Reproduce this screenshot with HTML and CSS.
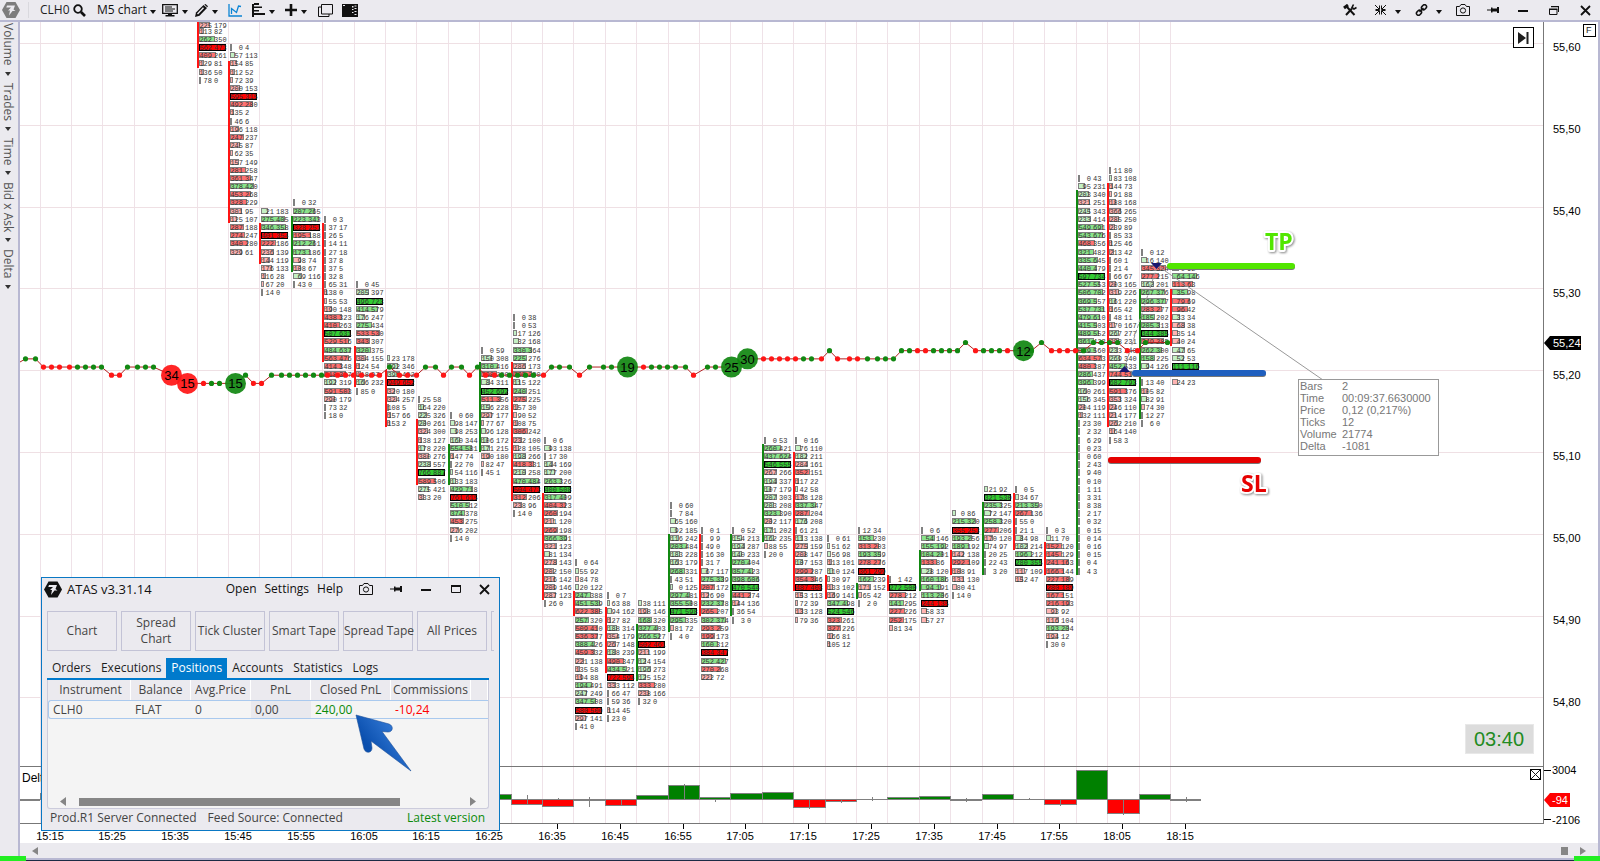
FILE: index.html
```html
<!DOCTYPE html>
<html lang="en">
<head>
<meta charset="utf-8">
<title>CLH0 M5 chart</title>
<link rel="stylesheet" href="styles.css">
</head>
<body>
<svg class="defs" width="0" height="0" aria-hidden="true">
  <symbol id="i-logo" viewBox="0 0 18 16"><path d="M4.500 0h9L18 8l-4.500 8h-9L0 8z"/><path class="cut" d="M5 3.500h8l-1.500 4 2 1.500h-3l-3.500 4.500 1-5H6l3-3H4.300z"/></symbol>
  <symbol id="i-camera" viewBox="0 0 14 13"><path fill="none" stroke="currentColor" d="M.500 2.500h3l1.500-2h4l1.500 2h3v9H.500z"/><circle cx="7" cy="6.500" r="2.600" fill="none" stroke="currentColor"/></symbol>
  <symbol id="i-pin" viewBox="0 0 12 8"><path d="M0 3.500h4V1.500h1.500V2.500H10V1h2v6h-2V5.500H5.500V6.500H4v-2H0z"/></symbol>
  <symbol id="i-close" viewBox="0 0 11 11"><path fill="none" stroke="currentColor" stroke-width="1.800" d="M1 1l9 9M10 1l-9 9"/></symbol>
  <symbol id="i-caret" viewBox="0 0 6 4"><path d="M0 0h6L3 4z"/></symbol>
</svg>

<header class="toolbar">
  <div class="tools">
    <svg class="app-logo" width="18" height="16"><use href="#i-logo"/></svg>
    <span class="rule"></span>
    <span class="symbol">CLH0</span>
    <button class="tool" aria-label="Find symbol"><svg class="stroked" width="13" height="13" viewBox="0 0 13 13"><circle cx="5" cy="5" r="3.800" stroke-width="1.800"/><path stroke-width="2.600" d="M8 8l4 4"/></svg></button>
    <button class="tool frame">M5 chart<svg width="6" height="4"><use href="#i-caret"/></svg></button>
    <button class="tool drop" aria-label="Template"><svg width="16" height="13" viewBox="0 0 16 13"><path fill="none" stroke="currentColor" stroke-width="1.300" d="M.700.700h14.600v8.600H.700z"/><path d="M3 2.500h7v1H3zM3 4.500h10v1H3zM3 6.500h8v1H3zM6 9h4v2h2.500v1.500h-9V11H6z"/></svg><svg width="6" height="4"><use href="#i-caret"/></svg></button>
    <button class="tool drop" aria-label="Draw"><svg width="13" height="13" viewBox="0 0 13 13"><path d="M0 13l1-4.500L8.500 1 12 4 4.500 11.800z"/><path fill="#ebeaef" d="M2 9.500l6-6.200 1 1L3 10.500z"/><path d="M9.300.500L10.500 0 13 2.300l-.800 1z"/></svg><svg width="6" height="4"><use href="#i-caret"/></svg></button>
    <button class="tool blue" aria-label="Indicators"><svg class="stroked" width="14" height="13" viewBox="0 0 14 13" stroke-width="1.300"><path d="M1 0v12h13M3.500 10V4.500l5 4L10.500 2 13 2.500"/></svg></button>
    <button class="tool drop" aria-label="Clusters"><svg width="13" height="14" viewBox="0 0 13 14"><path d="M0 1h2v13H0zM2 0h5v2H2zM2 3.500h8v1.500H2zM2 7h5v1.500H2zM2 10h11v2H2z"/></svg><svg width="6" height="4"><use href="#i-caret"/></svg></button>
    <button class="tool drop" aria-label="Crosshair"><svg width="12" height="12" viewBox="0 0 12 12"><path d="M4.700 0h2.600v4.700H12v2.600H7.300V12H4.700V7.300H0V4.700h4.700z"/></svg><svg width="6" height="4"><use href="#i-caret"/></svg></button>
    <button class="tool" aria-label="Windows"><svg width="15" height="13" viewBox="0 0 15 13"><path fill="none" stroke="currentColor" d="M3.500.500h11v9.500h-11zM3 3H.500v9.500H11V10"/></svg></button>
    <button class="tool" aria-label="Trading panel"><svg width="16" height="13" viewBox="0 0 16 13"><path d="M0 0h16v13H0z"/><path fill="#ebeaef" d="M10 2h1.500v1.500H10zM10 5h1.500v1H10zM10 8h1.500v1H10zM12.500 1.500h2v1h-2zM12.500 4h2v1h-2zM12.500 7h2v1h-2zM12.500 10h2v1h-2zM1 1h2v1H1z"/></svg></button>
  </div>
  <div class="tools">
    <button class="tool wide" aria-label="Settings"><svg class="stroked" width="14" height="12" viewBox="0 0 14 12"><path stroke-width="3" d="M1 4L5 1"/><path stroke-width="2" d="M4 3l7.500 8M3 11l6-6.500"/><path stroke-width="1.600" d="M10.500 0.500L9 3.500l2 1.500 2.500-1.500"/></svg></button>
    <button class="tool wider" aria-label="Collapse"><svg class="stroked" width="13" height="12" viewBox="0 0 13 12"><path d="M1 1l4 4M12 1L8 5M1 11l4-4M12 11L8 7M5.500 1.500v4h-4M7.500 1.500v4h4M5.500 10.500v-4h-4M7.500 10.500v-4h4"/></svg><svg width="6" height="4"><use href="#i-caret"/></svg></button>
    <button class="tool wider" aria-label="Link"><svg class="stroked" width="13" height="12" viewBox="0 0 13 12" stroke-width="1.500"><rect x="7" y="0.500" width="4" height="5.500" rx="2" transform="rotate(45 9 3.250)"/><rect x="2" y="6" width="4" height="5.500" rx="2" transform="rotate(45 4 8.750)"/><path d="M4.500 8L8.500 4"/></svg><svg width="6" height="4"><use href="#i-caret"/></svg></button>
    <button class="tool wide" aria-label="Screenshot"><svg width="14" height="13"><use href="#i-camera"/></svg></button>
    <button class="tool wide" aria-label="Pin"><svg width="12" height="8"><use href="#i-pin"/></svg></button>
    <button class="tool wide" aria-label="Minimize"><svg width="10" height="6"><path d="M0 3h10v2H0z"/></svg></button>
    <button class="tool wide" aria-label="Restore"><svg width="10" height="9" viewBox="0 0 10 9"><path fill="none" stroke="currentColor" d="M.500 3.500h7.500v5H.500zM2 .500h7.500V6"/><path d="M0 2.500h8.500v1.500H0zM2 0h8v1.300H2z"/></svg></button>
    <button class="tool last" aria-label="Close"><svg width="11" height="11"><use href="#i-close"/></svg></button>
  </div>
</header>

<main class="workspace">
  <nav class="rail">
    <button>Volume<svg width="6" height="4"><use href="#i-caret"/></svg></button>
    <button>Trades<svg width="6" height="4"><use href="#i-caret"/></svg></button>
    <button>Time<svg width="6" height="4"><use href="#i-caret"/></svg></button>
    <button>Bid x Ask<svg width="6" height="4"><use href="#i-caret"/></svg></button>
    <button>Delta<svg width="6" height="4"><use href="#i-caret"/></svg></button>
  </nav>

  <section class="chart">
    <div class="plot">
      <svg id="plot" class="fill"></svg>
      <dl class="ruler">
        <dt>Bars</dt><dd>2</dd>
        <dt>Time</dt><dd>00:09:37.6630000</dd>
        <dt>Price</dt><dd>0,12 (0,217%)</dd>
        <dt>Ticks</dt><dd>12</dd>
        <dt>Volume</dt><dd>21774</dd>
        <dt>Delta</dt><dd>-1081</dd>
      </dl>
      <button class="to-end" aria-label="Go to last bar"><svg width="11" height="12"><path d="M0 0l8 6-8 6zM8.500 0h2v12h-2z"/></svg></button>
      <div class="timer">03:40</div>
    </div>
    <div class="axis">
      <svg id="prices" class="fill"></svg>
      <button class="fix">F</button>
    </div>
    <div class="delta">
      <svg id="delta" class="fill"></svg>
      <span class="panel-name">Delta</span>
      <button class="panel-close" aria-label="Remove panel"><svg class="stroked" width="9" height="9"><path d="M0 0l9 9M9 0L0 9"/></svg></button>
    </div>
    <div class="axis">
      <svg id="delta-scale" class="fill"></svg>
    </div>
    <div class="times"><svg id="times" class="fill"></svg></div>
    <div class="scroller">
      <button aria-label="Scroll left"><svg width="6" height="8"><path d="M6 0v8L0 4z"/></svg></button>
      <span class="thumb"></span>
      <button aria-label="Scroll right"><svg width="6" height="8"><path d="M0 0v8l6-4z"/></svg></button>
    </div>
  </section>
</main>
<div class="corner corner-left"></div>
<div class="corner corner-right"></div>

<section class="window" aria-label="ATAS">
  <div class="titlebar">
    <svg width="18" height="17"><use href="#i-logo"/></svg>
    <h1>ATAS v3.31.14</h1>
    <button class="menu">Open</button>
    <button class="menu">Settings</button>
    <button class="menu">Help</button>
    <button class="ctl" aria-label="Screenshot"><svg width="14" height="13"><use href="#i-camera"/></svg></button>
    <button class="ctl" aria-label="Pin"><svg width="12" height="8"><use href="#i-pin"/></svg></button>
    <button class="ctl" aria-label="Minimize"><svg width="10" height="6"><path d="M0 3h10v2H0z"/></svg></button>
    <button class="ctl" aria-label="Maximize"><svg width="10" height="8"><path fill="none" stroke="currentColor" d="M.500.500h9v7h-9z"/><path d="M0 0h10v2H0z"/></svg></button>
    <button class="ctl" aria-label="Close"><svg width="11" height="11"><use href="#i-close"/></svg></button>
  </div>
  <div class="launch">
    <button>Chart</button>
    <button>Spread<br>Chart</button>
    <button>Tick Cluster</button>
    <button>Smart Tape</button>
    <button>Spread Tape</button>
    <button>All Prices</button>
    <button aria-label="More"></button>
  </div>
  <div class="tabs" role="tablist">
    <button role="tab">Orders</button>
    <button role="tab">Executions</button>
    <button role="tab" aria-selected="true">Positions</button>
    <button role="tab">Accounts</button>
    <button role="tab">Statistics</button>
    <button role="tab">Logs</button>
  </div>
  <div class="grid">
    <table>
      <colgroup><col class="c-first"><col class="c-mid"><col class="c-mid"><col class="c-mid"><col class="c-wide"><col class="c-wide"><col></colgroup>
      <thead><tr><th>Instrument</th><th>Balance</th><th>Avg.Price</th><th>PnL</th><th>Closed PnL</th><th>Commissions</th><th></th></tr></thead>
      <tbody><tr><td>CLH0</td><td>FLAT</td><td>0</td><td class="shade">0,00</td><td class="gain">240,00</td><td class="loss">-10,24</td><td></td></tr></tbody>
    </table>
    <div class="hscroll">
      <button aria-label="Scroll left"><svg width="6" height="9"><path d="M6 0v9L0 4.500z"/></svg></button>
      <span class="track"><span class="bar"></span></span>
      <button aria-label="Scroll right"><svg width="6" height="9"><path d="M0 0v9l6-4.500z"/></svg></button>
    </div>
  </div>
  <footer class="status"><span>Prod.R1 Server Connected</span><span>Feed Source: Connected</span><span class="gain">Latest version</span></footer>
  <svg class="pointer" width="58" height="60" viewBox="0 0 58 60"><defs><linearGradient id="pg" x1="0" y1="0.600" x2="0.800" y2="0"><stop offset="0.200" stop-color="#0a4fae"/><stop offset="1" stop-color="#3f85e0"/></linearGradient></defs><path fill="url(#pg)" stroke="#1b4f99" stroke-width=".6" stroke-linejoin="round" d="M1 1l33 9c5 2 4 8-1 8l-6-.5L56 57 16 27l1 7c0 5-6 6-8 1z"/></svg>
</section>
<script src="chart.js"></script>
</body>
</html>
```
FILE: styles.css
```css
* { box-sizing: border-box; }
body {
  margin: 0;
  height: 100vh;
  display: flex;
  flex-direction: column;
  overflow: hidden;
  background: #ebeaef;
  color: #1e1e1e;
  font: 12px/16px "Open Sans", "Noto Sans", sans-serif;
  border-bottom: 1px solid #1c2b45;
}
button {
  margin: 0;
  padding: 0;
  border: 0;
  background: none;
  font: inherit;
  color: inherit;
  cursor: pointer;
}
svg { fill: currentColor; flex: none; }
.stroked { fill: none; stroke: currentColor; }
.defs { position: absolute; }
.cut { fill: #ebeaef; }
.fill { display: block; width: 100%; height: 100%; }

/* Toolbar */
.toolbar {
  display: flex;
  justify-content: space-between;
  height: 22px;
  flex: none;
  border-bottom: 2px solid #b8b8d2;
}
.tools { display: flex; align-items: center; }
.app-logo { margin-left: 2px; color: #7d7d7d; }
.rule { width: 1px; height: 16px; margin: 0 11px 0 8px; background: #d9d9de; }
.symbol { width: 33px; }
.tool { width: 24px; height: 20px; display: flex; align-items: center; gap: 4px; color: #111; white-space: nowrap; }
.tool svg + svg, .frame svg { margin-top: 4px; }
.frame { width: 65px; gap: 3px; }
.drop { width: 33px; }
.wide { width: 31px; }
.wider { width: 41px; gap: 8px; }
.last { width: 20px; }
.blue { color: #0c84d4; }

/* Chart area */
.workspace { flex: 1; display: flex; min-height: 0; }
.rail {
  width: 20px;
  border-right: 2px solid #b8b8d2;
  display: flex;
  flex-direction: column;
  align-items: flex-start;
  padding-top: 1px;
  gap: 7px;
}
.rail button { writing-mode: vertical-rl; display: flex; align-items: center; gap: 6px; color: #555; line-height: 16px; }
.rail svg { color: #333; }
.chart {
  flex: 1;
  min-width: 0;
  display: grid;
  grid-template-columns: 1fr 55px;
  grid-template-rows: 1fr 58px 19px 17px;
  background: #fff;
  border-right: 2px solid #b8b8d2;
  font: 11px/12px "Liberation Sans", Arial, sans-serif;
}
.plot, .delta, .axis { position: relative; min-height: 0; min-width: 0; overflow: hidden; }
.axis { border-left: 1px solid #777; }
.delta { border-top: 1px solid #777; border-bottom: 1px solid #777; }
.times { grid-column: 1 / -1; }
.scroller {
  grid-column: 1 / -1;
  display: flex;
  align-items: center;
  gap: 12px;
  padding: 0 12px;
  background: #ebeaef;
  border-bottom: 2px solid #b8b8d2;
  color: #868686;
}
.scroller button, .hscroll button { display: flex; }
.thumb { width: 7px; height: 8px; margin-left: auto; background: #868686; }

.cell { font: 7px "Liberation Mono", monospace; fill: #333; }
.bubble { font-size: 13px; fill: #000; text-anchor: middle; }
.mark { font: bold 23px "Open Sans", sans-serif; stroke: #fff; stroke-width: 4px; paint-order: stroke; stroke-linejoin: round; filter: drop-shadow(1px 1px 1px #888); }
.level { stroke-width: 6px; stroke-linecap: round; filter: drop-shadow(0 1px 0 #777); }
.axis text, .times text { fill: #000; }
.times text { text-anchor: middle; }
.axis .on-tag { fill: #fff; }

.ruler {
  position: absolute;
  left: 1278px;
  top: 357px;
  width: 141px;
  margin: 0;
  padding: 0 0 3px 1px;
  display: grid;
  grid-template-columns: 42px 1fr;
  background: #fff;
  border: 1px solid #999;
  color: #777;
}
.ruler dd { margin: 0; }
.to-end {
  position: absolute;
  right: 9px;
  top: 5px;
  width: 21px;
  height: 21px;
  display: grid;
  place-items: center;
  border: 1px solid #000;
  background: #fff;
}
.timer {
  position: absolute;
  right: 9px;
  bottom: 12px;
  width: 69px;
  background: #dcdcdc;
  border: 1px solid #e8e8e8;
  color: #228b22;
  font-size: 20px;
  line-height: 28px;
  padding-left: 8px;
}
.fix {
  position: absolute;
  right: 2px;
  top: 2px;
  width: 13px;
  height: 13px;
  border: 1px solid #000;
  font-size: 9px;
  line-height: 11px;
  text-align: left;
  padding-left: 2px;
}
.panel-name { position: absolute; left: 2px; top: 4px; font-size: 12px; line-height: 14px; color: #000; }
.panel-close { position: absolute; right: 2px; top: 2px; width: 11px; height: 11px; border: 1px solid #000; display: flex; }

.corner { position: absolute; bottom: 0; width: 26px; height: 5px; background: #22ee22; }
.corner-left { left: 0; }
.corner-right { right: 0; }

/* Floating window */
.window {
  position: absolute;
  left: 41px;
  top: 577px;
  width: 459px;
  padding: 1px 5px 4px;
  background: #ebeaef;
  border: 1px solid #0a78c4;
  color: #1e1e1e;
}
.titlebar { display: flex; align-items: center; height: 20px; margin: 0 -3px; color: #111; }
.titlebar h1 { flex: 1; margin: 0 0 0 5px; font-size: 13px; font-weight: 400; line-height: 20px; }
.menu { margin-right: 8px; }
.ctl { width: 30px; height: 20px; display: grid; place-items: center; }
.ctl:last-child { width: 26px; }
.launch { display: flex; gap: 4px; margin-top: 12px; overflow: hidden; }
.launch button { flex: none; width: 70px; height: 40px; border: 1px solid #c3c3d6; color: #444; white-space: nowrap; }
.tabs { display: flex; margin: 7px 5px 0 0; border-bottom: 2px solid #007acc; }
.tabs button { padding: 0 5px; height: 20px; line-height: 20px; }
.tabs [aria-selected="true"] { background: #007acc; color: #fff; }
.grid { margin-right: 5px; background: #f4f4f4; border: 1px solid #ccccdc; border-top: 0; border-radius: 0 0 3px 3px; }
table { width: 100%; table-layout: fixed; border-collapse: separate; border-spacing: 0; color: #444; }
.c-first { width: 83px; }
.c-wide { width: 80px; }
.c-mid { width: 60px; }
th { height: 20px; padding: 0; font-weight: 400; background: #ebeaef; border-right: 1px solid #fff; }
th:first-child { padding-left: 3px; }
td { height: 19px; padding: 0 4px; line-height: 17px; border: 1px solid #a9c9ee; border-width: 1px 0; }
td:first-child { border-left-width: 1px; border-radius: 3px 0 0 3px; }
.shade { background: #e9e9ee; }
.gain, td.gain { color: #0a8a0a; }
td.loss { color: #f00; }
.hscroll { display: flex; align-items: center; gap: 13px; padding: 78px 12px 2px; color: #868686; }
.track { flex: 1; }
.bar { display: block; width: 85%; height: 8px; background: #868686; }
.status { display: flex; gap: 11px; margin-top: 1px; padding: 0 9px 0 3px; color: #444; }
.status .gain { margin-left: auto; }
.pointer { position: absolute; left: 313px; top: 136px; }
```
FILE: chart.js
```js
const NS = "http://www.w3.org/2000/svg";
const STEP = 31.4;   // width of one bar
const TICK = 8.18;   // height of one price level
const colX = k => Math.round(19.5 + STEP * k);
const rowY = n => 25 + TICK * n;

function add(parent, tag, attrs, text) {
  const el = document.createElementNS(NS, tag);
  for (const name in attrs) el.setAttribute(name, attrs[name]);
  if (text !== undefined) el.textContent = text;
  parent.appendChild(el);
  return el;
}
const rect = (p, x, y, width, height, fill, extra) => add(p, "rect", { x, y, width, height, fill, ...extra });

// First bar, first level, candle colour, candle top and bottom, then "bid ask" per level.
const bars = [
  [5, -3, "r", 0, 46, "225 179,113 82,262 350,562 473,409 261,129 81,136 50,78 0"],
  [6, 0, "r", 39, 201, "0 4,57 113,154 85,112 52,72 39,200 153,595 315,492 280,135 2,46 6,196 118,247 237,245 87,62 35,157 149,281 258,361 347,378 420,453 268,328 229,301 95,125 107,287 188,274 247,340 280,329 61"],
  [7, 20, "r", 201, 242, "21 183,275 405,346 358,401 354,222 186,236 139,144 119,176 133,116 28,67 20,14 0"],
  [8, 19, "g", 194, 250, "0 32,207 265,223 343,328 251,195 188,212 261,173 186,98 74,108 67,69 116,43 0"],
  [9, 21, "r", 201, 340, "0 3,37 17,26 5,14 11,27 18,37 8,37 5,32 8,65 31,138 0,55 53,190 148,438 323,410 263,507 631,529 516,484 637,563 476,414 348,518 397,192 319,591 503,290 179,73 32,18 0"],
  [10, 29, "r", 324, 365, "0 45,205 397,496 723,414 579,176 247,275 434,533 530,343 307,320 375,304 155,124 54,118 97,166 232,85 0"],
  [11, 38, "r", 348, 405, "23 178,292 346,396 402,949 652,320 180,324 257,108 5,157 66,153 2"],
  [12, 43, "r", 397, 463, "25 58,164 220,225 326,200 261,324 300,138 127,178 220,380 276,238 557,766 887,589 506,275 421,333 20"],
  [13, 45, "g", 422, 463, "0 60,98 147,98 253,160 344,554 581,147 74,22 70,54 116,133 183,429 718,761 615,510 512,374 378,453 275,276 202,14 0"],
  [14, 37, "g", 340, 430, "0 59,150 308,310 416,398 280,84 311,452 692,511 356,156 228,297 177,77 67,96 128,106 172,171 215,190 180,82 47,45 1"],
  [15, 33, "r", 340, 479, "0 38,0 53,17 126,32 168,330 364,225 276,286 173,395 290,115 122,240 251,275 225,157 30,90 52,108 75,306 242,232 100,128 105,198 266,418 331,210 258,470 484,504 473,312 206,238 96,14 0"],
  [16, 48, "r", 471, 578, "0 6,93 138,17 30,144 169,177 200,263 326,400 508,317 409,404 323,260 194,211 120,269 198,366 391,321 123,81 134,278 143,202 150,216 142,209 146,287 123,26 0"],
  [17, 63, "r", 569, 594, "0 64,55 92,84 78,20 122,247 388,451 539,622 385,257 320,509 410,536 377,388 426,459 332,221 138,135 58,194 88,194 491,247 249,347 508,580 500,297 141,41 0"],
  [18, 67, "r", 585, 651, "0 7,63 88,94 162,127 82,188 314,354 179,267 148,188 239,490 347,434 521,722 594,333 112,66 47,59 36,114 45,23 0"],
  [19, 68, "g", 602, 659, "38 111,198 146,168 320,327 403,266 527,502 461,211 199,124 154,196 273,125 152,333 280,238 166,32 0"],
  [20, 56, "g", 512, 610, "0 60,7 84,65 160,92 185,116 242,203 484,183 228,163 179,268 331,43 51,0 125,297 481,355 508,471 598,295 335,81 72,4 0"],
  [21, 59, "r", 512, 594, "0 1,9 9,49 0,16 30,31 7,67 117,275 339,207 172,126 90,232 378,265 207,302 374,293 259,199 173,160 312,384 347,252 427,270 268,222 72"],
  [22, 59, "g", 512, 594, "0 52,154 213,194 287,140 233,270 404,357 423,398 606,470 544,441 274,144 136,36 54,3 0"],
  [23, 48, "g", 422, 520, "0 53,260 421,437 624,546 555,267 266,194 337,107 179,207 303,203 208,323 390,202 117,171 202,162 235,88 55,20 0"],
  [24, 48, "r", 430, 569, "0 16,76 110,182 211,284 161,352 151,117 22,42 58,178 128,337 347,287 204,176 208,61 21,113 138,275 159,208 147,107 153,299 287,354 346,487 408,153 113,72 39,133 128,79 36"],
  [25, 60, "r", 553, 577, "0 61,51 62,56 98,113 101,110 124,30 97,133 102,169 141,347 498,524 546,323 261,327 226,166 81,105 12"],
  [26, 59, "g", 561, 577, "12 34,153 230,313 203,193 359,278 276,361 299,162 239,171 152,65 42,2 0"],
  [27, 65, "r", 553, 569, "1 42,272 500,278 212,141 295,227 226,252 175,81 34"],
  [28, 59, "g", 528, 569, "0 6,54 146,155 192,104 201,133 86,28 120,160 186,94 191,113 206,244 135,58 33,57 27"],
  [29, 57, "r", 528, 553, "0 86,215 320,355 253,193 256,189 192,142 138,292 109,108 91,131 130,80 41,14 0"],
  [30, 54, "g", 480, 553, "21 92,321 530,235 325,72 147,258 320,277 206,170 120,74 97,20 25,22 43,3 20"],
  [31, 54, "r", 471, 528, "0 5,34 67,213 350,267 136,55 0,21 1,84 98,102 214,196 212,280 355,117 109,152 47"],
  [32, 59, "r", 520, 553, "0 3,11 70,152 120,145 129,241 163,166 144,227 189,280 189,167 151,216 193,93 92,116 104,193 204,194 12,30 0"],
  [33, 16, "g", 168, 553, "0 43,95 231,203 340,321 251,245 343,233 414,549 691,543 676,468 356,321 482,335 645,440 479,597 734,527 553,506 702,369 557,537 731,479 610,415 503,489 552,361 423,339 560,634 573,480 387,286 437,396 399,160 261,156 345,204 119,132 111,23 30,2 32,6 29,0 23,0 60,2 43,9 40,0 10,1 11,3 31,8 38,2 17,0 32,0 15,0 14,0 16,0 15,0 4,4 3"],
  [34, 15, "r", 161, 405, "11 80,83 108,144 73,91 88,188 168,366 265,285 250,239 89,85 33,125 46,213 42,60 1,21 4,66 67,203 165,319 226,161 220,165 42,48 11,170 167,267 277,298 231,233 240,269 340,452 533,744 517,682 793,591 376,353 324,246 110,214 177,262 210,164 140,58 3"],
  [35, 25, "g", 267, 397, "0 12,16 140,345 324,277 215,162 201,267 376,296 377,283 277,185 202,205 313,344 385,349 285,262 300,158 225,94 126,70 60,13 40,105 82,82 91,74 30,12 27,6 0"],
  [36, 27, "r", 267, 324, "0 62,64 146,113 63,35 98,79 69,96 42,33 34,68 38,35 14,40 24,47 65,52 53,111 116,66 50,24 23"]
];

const FILLS = {
  g: { weak: "#c4f0c4", strong: "#8ae38a", poc: "#32cd32" },
  r: { weak: "#ffb4b4", strong: "#ff7272", poc: "#ff0000" }
};
const LINE = { g: "#118811", r: "#ff1414" };

function drawGrid(svg) {
  for (let k = 0; k <= 36; k++) rect(svg, colX(k), 0, 1, "100%", "#efe2e8");
}

const plot = document.getElementById("plot");
drawGrid(plot);
for (let i = 0; i < 9; i++) rect(plot, 0, Math.round(21 + i * 81.8), "100%", 1, "#efe0e4");

for (const [k, first, side, top, bottom, rows] of bars) {
  const x = colX(k) + 2;
  const levels = rows.split(",").map(r => r.split(" ").map(Number));
  const max = Math.max(...levels.map(([b, a]) => b + a));
  const box = add(plot, "svg", { x, y: 0, width: 28, height: "100%" });
  levels.forEach(([bid, ask], i) => {
    const y = Math.max(3, Math.round(rowY(first + i)));
    const vol = bid + ask;
    const w = Math.round(vol / max * 27);
    const tone = FILLS[ask > bid ? "g" : "r"];
    if (vol === max) {
      rect(box, 0.5, y - 2.5, 26, 6, tone.poc, { stroke: "#000" });
    } else if (w < 3) {
      rect(box, 0, y - 3, 2, 7, "#808080");
    } else {
      rect(box, 0.5, y - 2.5, w - 1, 5, w > 13 ? tone.strong : tone.weak, { stroke: "#808080" });
    }
    add(box, "text", { class: "cell", x: 13, y: y + 3, "text-anchor": "end" }, bid);
    add(box, "text", { class: "cell", x: 15, y: y + 3 }, ask);
  });
  rect(plot, colX(k), top, 2, bottom - top, LINE[side]);
}

// Trade tape: x, level, colour; a fourth value is a large trade's size.
const tape = "5 2 g,15 2 g,23 3 r,31 3 r,39 3 r,49 3 r,57 3 g,65 3 g,73 3 g,81 3 g,91 4 r,99 4 r,107 3 g,117 3 g,125 3 g,133 3 g,151 4 r 34,167 5 r 15,183 5 r,191 5 g,199 5 g,215 5 g 15,225 4 g,233 5 r,241 5 r,251 4 g,261 4 g,269 4 g,277 4 g,285 4 g,293 4 g,301 4 g,307 4 r,317 4 r,325 4 r,333 4 r,341 4 r,351 4 r,359 4 r,369 3 g,379 4 r,387 4 r,396 4 r,405 3 g,415 3 g,423 4 r,431 3 g,441 3 g,449 4 r,457 3 g,465 4 r,474 4 r,481 4 g,489 4 g,497 4 g,505 4 g,513 4 g,523 4 r,531 3 g,539 3 g,549 3 g,559 4 r,569 3 g,583 3 g,591 3 g,607 3 g 19,623 3 r,631 3 g,639 3 g,647 3 g,655 3 g,665 3 g,673 4 r,687 3 g,695 3 g,711 3 g 25,727 2 g 30,743 2 r,751 2 r,759 2 r,767 2 r,775 2 r,783 2 g,791 2 g,801 2 r,809 1 g,817 2 r,829 2 r,837 2 r,847 2 g,857 2 g,865 2 g,873 2 g,881 1 g,889 1 g,897 1 r,905 1 r,913 1 g,921 1 g,929 1 g,937 1 g,945 0 g,955 1 r,963 1 g,971 1 g,979 1 g,987 1 r,1003 1 g 12,1011 1 g,1021 0 g,1031 1 r,1039 1 r,1047 1 r,1055 1 r,1063 1 g,1073 0 g,1081 0 g,1089 0 g,1097 0 g,1107 1 r,1117 1 r,1125 0 g,1147 0 g"
  .split(",").map(s => s.split(" ")).map(([x, l, c, size]) => ({ x: +x + 0.5, y: 320.5 + TICK * l, c, size }));
add(plot, "polyline", { points: "0,340 " + tape.map(p => p.x + "," + p.y).join(" "), fill: "none", stroke: "#b22222" });
for (const p of tape) {
  add(plot, "circle", { cx: p.x, cy: p.y, r: p.size ? 10.5 : 2.6, fill: p.c === "g" ? "#128812" : "#ff1616", "fill-opacity": p.size ? 0.93 : 1 });
}
for (const p of tape) if (p.size) add(plot, "text", { class: "bubble", x: p.x, y: p.y + 5 }, p.size);

// Position markers and hand-drawn levels
add(plot, "path", { d: "M1104.500 346L1136.500 246", stroke: "#999", "stroke-dasharray": "4 2", fill: "none" });
add(plot, "path", { d: "M1136.500 243L1303 358", stroke: "#999", fill: "none" });
add(plot, "path", { d: "M1131 241h11l-5.500 6zM1099 350h11l-5.500-6z", fill: "#191970" });
const level = (x1, x2, y, stroke) => add(plot, "line", { class: "level", x1, x2, y1: y, y2: y + 0.01, stroke });
level(1150, 1272, 244, "#52e600");
level(1115, 1243, 351, "#1f5fbf");
level(1091, 1238, 438, "#e60000");
add(plot, "text", { class: "mark", x: 1245, y: 228, fill: "#52e600" }, "TP");
add(plot, "text", { class: "mark", x: 1221, y: 470, fill: "#e60000" }, "SL");

// Price scale
const prices = document.getElementById("prices");
for (let i = 0; i < 9; i++) {
  const value = (55.6 - i / 10).toFixed(2).replace(".", ",");
  add(prices, "text", { x: 9, y: Math.round(29.4 + i * 81.8) }, value);
}
add(prices, "path", { d: "M0 321l6-7h31v14H6z", fill: "#000" });
add(prices, "text", { x: 9, y: 325, class: "on-tag" }, "55,24");

// Delta histogram: bar, height (up is positive), whisker top, whisker bottom
const delta = document.getElementById("delta");
const ZERO = 32;
drawGrid(delta);
rect(delta, 0, ZERO, colX(37), 1, "#808080");
const hist = [[-1, -1, 0, 1], [0, 6, 0, 0], [14, 5, 0, 0], [15, -5, 4, 6], [16, -7, 1, 0], [17, -1, 2, 8], [18, -6, 0, 7], [19, 4, 0, 0], [20, 14, 15, 0],
  [21, 2, 0, 3], [22, 6, 0, 0], [23, 7, 0, 1], [24, -8, 0, 10], [25, -2, 0, 4], [26, 0, 2, 2], [27, 2, 0, 1], [28, 3, 0, 1], [29, -1, 1, 3],
  [30, 5, 0, 0], [31, 0, 1, 1], [32, -5, 0, 7], [33, 29, 0, 0], [34, -14, 0, 16], [35, 5, 0, 1], [36, -1, 2, 3]];
for (const [k, h, up, down] of hist) {
  const x = colX(k), w = colX(k + 1) - x;
  if (Math.abs(h) > 1) {
    rect(delta, x + 0.5, (h > 0 ? ZERO - h : ZERO) + 0.5, w, Math.abs(h), h > 0 ? "#008000" : "#ff0000", { stroke: "#808080" });
  } else if (h) {
    rect(delta, x, ZERO, w, 2, "#808080");
  }
  if (up + down) rect(delta, x + 16, ZERO - up, 1, up + down, "#808080");
}

const scale = document.getElementById("delta-scale");
rect(scale, 0, 4, 7, 1, "#000");
rect(scale, 0, 53, 7, 1, "#000");
add(scale, "text", { x: 8, y: 8 }, "3004");
add(scale, "text", { x: 8, y: 58 }, "-2106");
add(scale, "path", { d: "M0 34l6-7h20v14H6z", fill: "#ff0000" });
add(scale, "text", { x: 8, y: 38, class: "on-tag" }, "-94");

// Time scale
const times = document.getElementById("times");
for (let i = 0; i <= 18; i++) {
  const minutes = 15 * 60 + 15 + i * 10;
  const x = colX(i * 2) + 15;
  rect(times, x, 0, 1, 5, "#000");
  add(times, "text", { x: x - 5, y: 16 }, Math.floor(minutes / 60) + ":" + String(minutes % 60).padStart(2, "0"));
}
```
